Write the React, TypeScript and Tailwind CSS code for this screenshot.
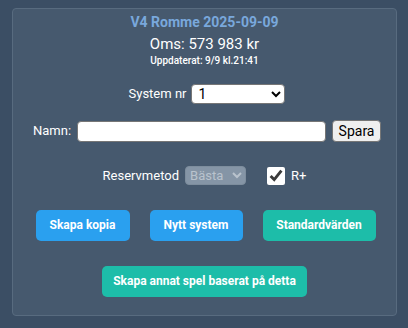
import { useState } from 'react';

const App = () => {
  const [system, setSystem] = useState('1');
  const [name, setName] = useState('');
  const [rPlus, setRPlus] = useState(true);

  return (
    <div className="min-h-screen w-full bg-[#3b4e64] pt-2 font-['Roboto',sans-serif]">
      <div className="ml-3 w-[385px] rounded border border-[#586b7f] bg-[#46596e] pt-1 pb-[18px] text-center">
        {/* Header */}
        <div className="text-[14px] leading-[18px] font-bold text-[#79a8dc]">V4 Romme 2025-09-09</div>
        <div className="mt-[3px] text-[15px] leading-[20px] text-white">Oms: 573 983 kr</div>
        <div className="text-[10px] leading-[14px] font-medium text-white">Uppdaterat: 9/9 kl.21:41</div>

        {/* System */}
        <div className="mt-4 flex items-center justify-center gap-[5px] pl-[5px]">
          <span className="text-[13px] text-white">System nr</span>
          <select
            value={system}
            onChange={(e) => setSystem(e.target.value)}
            className="h-5 w-[94px] rounded-sm border border-[#767676] bg-white pl-0.5 text-[14px] text-black"
          >
            <option value="1">1</option>
            <option value="2">2</option>
            <option value="3">3</option>
          </select>
        </div>

        {/* Namn */}
        <div className="mt-4 flex items-center justify-center gap-[6px] pl-[5px]">
          <span className="text-[13px] text-white">Namn:</span>
          <input
            value={name}
            onChange={(e) => setName(e.target.value)}
            className="h-[21px] w-[249px] rounded-sm border border-[#767676] bg-white text-black"
          />
          <button className="h-[22px] w-[49px] rounded-sm border border-[#767676] bg-[#efefef] text-[14px] text-black">
            Spara
          </button>
        </div>

        {/* Reservmetod */}
        <div className="mt-6 flex items-center justify-center">
          <span className="text-[13px] text-white">Reservmetod</span>
          <select
            disabled
            className="ml-[6px] h-[19px] w-[61px] rounded-sm border border-[#7d8d9d] bg-[#8595a6] text-[13px] text-[#b9c3cd] opacity-100"
          >
            <option>Bästa</option>
          </select>
          <input
            type="checkbox"
            checked={rPlus}
            onChange={(e) => setRPlus(e.target.checked)}
            className="ml-[21px] h-[18px] w-[18px] accent-white"
          />
          <span className="ml-[6px] text-[13px] text-white">R+</span>
        </div>

        {/* Actions */}
        <div className="mt-6 flex justify-center gap-5 pl-[2px]">
          <button className="h-[31px] w-[94px] rounded-[5px] bg-[#2aa0ef] text-[12px] font-bold text-white">
            Skapa kopia
          </button>
          <button className="h-[31px] w-[93px] rounded-[5px] bg-[#2aa0ef] text-[12px] font-bold text-white">
            Nytt system
          </button>
          <button className="h-[31px] w-[113px] rounded-[5px] bg-[#1dbda9] text-[12px] font-bold text-white">
            Standardvärden
          </button>
        </div>

        <div className="mt-[25px] flex justify-center">
          <button className="h-[31px] w-[205px] rounded-[5px] bg-[#1dbda9] text-[12px] font-bold text-white">
            Skapa annat spel baserat på detta
          </button>
        </div>
      </div>
    </div>
  );
};

export default App;
